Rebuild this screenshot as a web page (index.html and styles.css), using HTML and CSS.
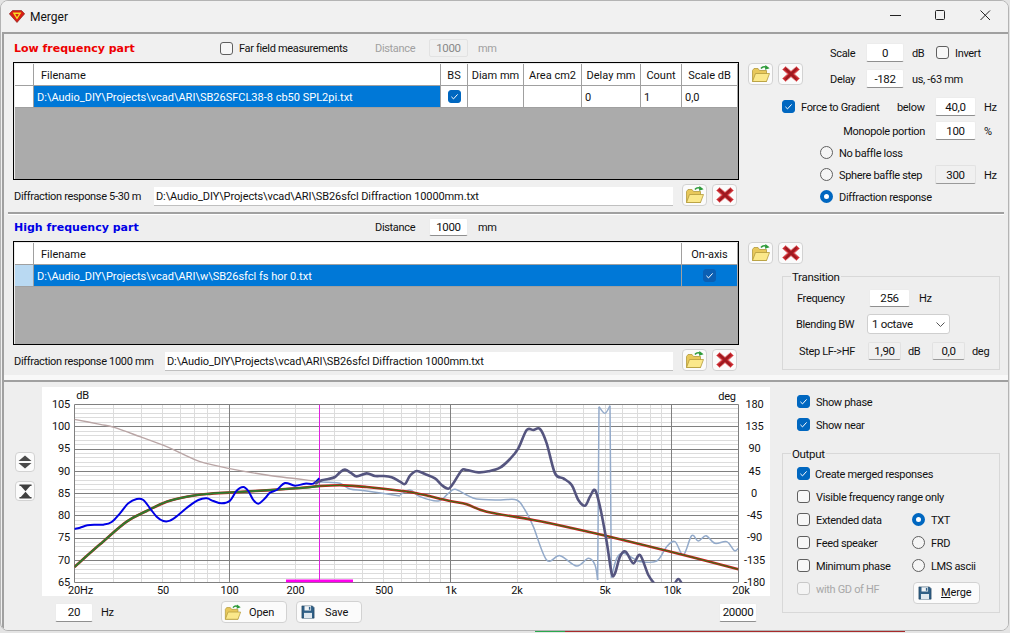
FILE: index.html
```html
<!DOCTYPE html>
<html lang="en">
<head>
<meta charset="utf-8">
<title>Merger</title>
<link rel="stylesheet" href="styles.css">
</head>
<body>
<svg class="defs" width="0" height="0" aria-hidden="true">
  <symbol id="i-folder" viewBox="0 0 20 18">
    <path d="M1.5 5.5V16.5H15.5L15.5 5.5H8.5L7 3.5H3Z" fill="#e8c85a" stroke="#b39a3c" stroke-width=".8"/>
    <path d="M1.5 16.5L4.5 8.5H18.5L15.5 16.5Z" fill="#fbe88a" stroke="#b39a3c" stroke-width=".8"/>
    <path d="M10 3.6C11.5 1.6 13.6 1.4 15.6 2.4" fill="none" stroke="#2d9a3a" stroke-width="1.6"/>
    <path d="M14.4 0L18.6 3.2L14 4.8Z" fill="#2d9a3a"/>
  </symbol>
  <symbol id="i-x" viewBox="0 0 20 18">
    <path d="M4.5 1.5L10 6.2L15.5 1.5L18.5 4.5L13.4 9L18.5 13.5L15.5 16.5L10 11.8L4.5 16.5L1.5 13.5L6.6 9L1.5 4.5Z" fill="#c8242c" stroke="#e58a8a" stroke-width=".8" stroke-linejoin="round"/>
    <path d="M4.6 3.6L15.4 14.6M15.4 3.6L4.6 14.6" stroke="#9c1a20" stroke-width="2.2"/>
  </symbol>
  <symbol id="i-save" viewBox="0 0 16 16">
    <path d="M1 1H13L15 3V15H1Z" fill="#2f5f86" stroke="#1c3b55" stroke-width=".6"/>
    <path d="M4 1.3H11.5V6.3H4Z" fill="#f1f4f6"/>
    <path d="M9 2.2H10.7V5.4H9Z" fill="#2f5f86"/>
    <path d="M3.4 9H12.6V15H3.4Z" fill="#dfe8ef"/>
  </symbol>
  <symbol id="i-updown" viewBox="0 0 14 14">
    <path d="M7 0.5L13.5 6H0.5Z M0.5 8H13.5L7 13.5Z" fill="#4a4a4a"/>
  </symbol>
  <symbol id="i-hourglass" viewBox="0 0 14 16">
    <path d="M0.5 0.5H13.5V2H12L7 7.6L2 2H0.5Z M0.5 15.5H13.5V14H12L7 8.4L2 14H0.5Z" fill="#3f3f3f"/>
  </symbol>
  <symbol id="i-tick" viewBox="0 0 13 13">
    <path d="M3.4 6.8L5.5 8.9L9.6 4.4" fill="none" stroke="#fff" stroke-width="1"/>
  </symbol>
</svg>

<div class="window">
  <header class="titlebar">
    <svg class="app-icon" viewBox="0 0 16 13" aria-hidden="true">
      <path d="M3.5 .5H12.5L15.7 3.8L8 12.5L.3 3.8Z" fill="#d81e16" stroke="#7a1a10" stroke-width=".6"/>
      <path d="M3.6 2.6H12.4L8 9.4Z" fill="#f7dc24"/>
      <path d="M6.2 4H9.8L8 7.2Z" fill="#d81e16"/>
    </svg>
    <span class="app-title">Merger</span>
    <div class="win-controls">
      <svg class="win-btn" viewBox="0 0 45 20" aria-hidden="true"><path d="M0 10.5H11" stroke="#222" stroke-width="1"/></svg>
      <svg class="win-btn" viewBox="0 0 45 20" aria-hidden="true"><rect x=".5" y="5.5" width="9" height="9" rx="1" fill="none" stroke="#222"/></svg>
      <svg class="win-btn" viewBox="0 0 28 20" aria-hidden="true"><path d="M.5 5.5L10 15M10 5.5L.5 15" stroke="#222" stroke-width="1"/></svg>
    </div>
  </header>

  <main class="client">
    <section class="part part-lf">
      <div class="left-col">
        <div class="part-head">
          <h2 class="part-title red">Low frequency part</h2>
          <span class="check far-check"></span>
          <span class="far-label">Far field measurements</span>
          <span class="dist-label dim">Distance</span>
          <span class="field w39 off dim">1000</span>
          <span class="dist-unit dim">mm</span>
        </div>
        <div class="table-wrap lf-table">
          <table class="grid">
            <colgroup><col class="c-sel"><col class="c-file"><col class="c-bs"><col class="c-diam"><col class="c-area"><col class="c-delay"><col class="c-count"><col class="c-scale"></colgroup>
            <tr class="hdr"><th></th><th class="th-file">Filename</th><th>BS</th><th>Diam mm</th><th>Area cm2</th><th>Delay mm</th><th>Count</th><th>Scale dB</th></tr>
            <tr><td></td><td class="sel">D:\Audio_DIY\Projects\vcad\ARI\SB26SFCL38-8 cb50 SPL2pi.txt</td><td class="ctr"><span class="check on inline"><svg><use href="#i-tick"/></svg></span></td><td></td><td></td><td>0</td><td>1</td><td>0,0</td></tr>
          </table>
        </div>
        <div class="diff-row">
          <span class="diff-label lf-label">Diffraction response 5-30 m</span>
          <span class="path-field lf-path">D:\Audio_DIY\Projects\vcad\ARI\SB26sfcl Diffraction 10000mm.txt</span>
          <button class="icon-btn diff-first"><svg><use href="#i-folder"/></svg></button>
          <button class="icon-btn"><svg><use href="#i-x"/></svg></button>
        </div>
      </div>
      <div class="side-col">
        <div class="side-top">
          <div class="btn-pair">
            <button class="icon-btn"><svg><use href="#i-folder"/></svg></button>
            <button class="icon-btn"><svg><use href="#i-x"/></svg></button>
          </div>
          <div class="scale-block">
            <div class="row r19"><span class="lbl w36">Scale</span><span class="field w38">0</span><span class="lbl unit w24">dB</span><span class="check"></span><span class="lbl opt">Invert</span></div>
            <div class="row r19"><span class="lbl w36">Delay</span><span class="field w38">-182</span><span class="lbl unit">us, -63 mm</span></div>
          </div>
        </div>
        <div class="row r19 force-row"><span class="check on"><svg><use href="#i-tick"/></svg></span><span class="lbl opt w96">Force to Gradient</span><span class="lbl w38">below</span><span class="field w41">40,0</span><span class="lbl unit">Hz</span></div>
        <div class="row r19 mono-row"><span class="lbl mono-label">Monopole portion</span><span class="field w41">100</span><span class="lbl unit">%</span></div>
        <div class="row r19 radio-row"><span class="radio"></span><span class="lbl opt">No baffle loss</span></div>
        <div class="row r19 radio-row"><span class="radio"></span><span class="lbl opt w96">Sphere baffle step</span><span class="field w41 off">300</span><span class="lbl unit">Hz</span></div>
        <div class="row r19 radio-row"><span class="radio on"></span><span class="lbl opt">Diffraction response</span></div>
      </div>
    </section>
    <div class="sep-short"></div>

    <section class="part part-hf">
      <div class="left-col">
        <div class="part-head hf-head">
          <h2 class="part-title blue">High frequency part</h2>
          <span class="dist-label hf-dist">Distance</span>
          <span class="field w39">1000</span>
          <span class="dist-unit">mm</span>
        </div>
        <div class="table-wrap hf-table">
          <table class="grid">
            <colgroup><col class="c-sel"><col class="c-file2"><col class="c-scale"></colgroup>
            <tr class="hdr"><th></th><th class="th-file">Filename</th><th>On-axis</th></tr>
            <tr><td class="sel-head"></td><td class="sel">D:\Audio_DIY\Projects\vcad\ARI\w\SB26sfcl fs hor 0.txt</td><td class="sel ctr"><span class="check on inline dark"><svg><use href="#i-tick"/></svg></span></td></tr>
          </table>
        </div>
        <div class="diff-row">
          <span class="diff-label hf-label">Diffraction response 1000 mm</span>
          <span class="path-field hf-path">D:\Audio_DIY\Projects\vcad\ARI\SB26sfcl Diffraction 1000mm.txt</span>
          <button class="icon-btn diff-first"><svg><use href="#i-folder"/></svg></button>
          <button class="icon-btn"><svg><use href="#i-x"/></svg></button>
        </div>
      </div>
      <div class="side-col">
        <div class="btn-pair hf-pair">
          <button class="icon-btn"><svg><use href="#i-folder"/></svg></button>
          <button class="icon-btn"><svg><use href="#i-x"/></svg></button>
        </div>
        <div class="group transition">
          <span class="legend">Transition</span>
          <div class="row t-row1"><span class="lbl t-freq">Frequency</span><span class="field w41">256</span><span class="lbl unit">Hz</span></div>
          <div class="row t-row2"><span class="lbl t-blend">Blending BW</span>
            <span class="select">1 octave<svg class="chev" viewBox="0 0 9 5" aria-hidden="true"><path d="M.5 .5L4.5 4.5L8.5 .5" fill="none" stroke="#555"/></svg></span></div>
          <div class="row t-row3"><span class="lbl t-step">Step LF-&gt;HF</span><span class="field w33 off">1,90</span><span class="lbl t-db">dB</span><span class="field w33 off">0,0</span><span class="lbl unit t-deg">deg</span></div>
        </div>
      </div>
    </section>
    <div class="sep-long"></div>

    <section class="part part-plot">
      <div class="plot-col">
        <div class="plot-row">
          <div class="zoom-btns">
            <button class="zoom-btn"><svg class="z-up"><use href="#i-updown"/></svg></button>
            <button class="zoom-btn"><svg class="z-hg"><use href="#i-hourglass"/></svg></button>
          </div>
          <svg class="chart" id="chart" viewBox="42 387 728 209" role="img" aria-label="Frequency response chart">
            <g id="grid"></g>
            <g id="curves"></g>
            <g class="axis" text-anchor="end">
              <text x="70" y="408">105</text><text x="70" y="430">100</text><text x="70" y="452">95</text><text x="70" y="474.5">90</text>
              <text x="70" y="497">85</text><text x="70" y="519">80</text><text x="70" y="541">75</text><text x="70" y="563.5">70</text><text x="70" y="586">65</text>
            </g>
            <g class="axis" text-anchor="middle">
              <text x="754.5" y="408">180</text><text x="754.5" y="430">135</text><text x="754.5" y="452">90</text><text x="754.5" y="474.5">45</text>
              <text x="754" y="497">0</text><text x="754.5" y="519">-45</text><text x="754.5" y="541">-90</text><text x="754.5" y="563.5">-135</text><text x="754.5" y="585.5">-180</text>
              <text x="80.5" y="594">20Hz</text><text x="163" y="594">50</text><text x="229.5" y="594">100</text><text x="295.5" y="594">200</text><text x="384" y="594">500</text>
              <text x="451" y="594">1k</text><text x="517" y="594">2k</text><text x="605" y="594">5k</text><text x="672.5" y="594">10k</text><text x="741" y="594">20k</text>
              <text x="82.5" y="399">dB</text><text x="727" y="400">deg</text>
            </g>
          </svg>
        </div>
        <div class="plot-bottom">
          <span class="field w38 min-f">20</span><span class="lbl unit hz-fixed">Hz</span>
          <button class="text-btn open-btn"><svg class="btn-ic"><use href="#i-folder"/></svg><span>Open</span></button>
          <button class="text-btn save-btn"><svg class="btn-ic ic-s"><use href="#i-save"/></svg><span>Save</span></button>
          <span class="field w38 max-f">20000</span>
        </div>
      </div>
      <div class="plot-side">
        <div class="row r23 show-row"><span class="check on"><svg><use href="#i-tick"/></svg></span><span class="lbl opt">Show phase</span></div>
        <div class="row r23 show-row"><span class="check on"><svg><use href="#i-tick"/></svg></span><span class="lbl opt">Show near</span></div>
        <div class="group output">
          <span class="legend">Output</span>
          <div class="row r23"><span class="check on"><svg><use href="#i-tick"/></svg></span><span class="lbl opt o-tight">Create merged responses</span></div>
          <div class="row r23"><span class="check"></span><span class="lbl opt">Visible frequency range only</span></div>
          <div class="row r23"><span class="check"></span><span class="lbl opt o-w">Extended data</span><span class="radio on"></span><span class="lbl opt">TXT</span></div>
          <div class="row r23"><span class="check"></span><span class="lbl opt o-w">Feed speaker</span><span class="radio"></span><span class="lbl opt">FRD</span></div>
          <div class="row r23"><span class="check"></span><span class="lbl opt o-w">Minimum phase</span><span class="radio"></span><span class="lbl opt">LMS ascii</span></div>
          <div class="row r23"><span class="check dis"></span><span class="lbl opt o-w dis-text">with GD of HF</span>
            <button class="text-btn merge-btn"><svg class="btn-ic ic-s"><use href="#i-save"/></svg><span><u>M</u>erge</span></button></div>
        </div>
      </div>
    </section>
  </main>
</div>
<div class="desktop-strip"><span class="seg-a"></span><span class="seg-b"></span><span class="seg-c"></span></div>
<script src="chart.js"></script>
</body>
</html>
```
FILE: styles.css
```css
* { box-sizing: border-box; }
html, body { margin: 0; padding: 0; }
body {
  width: 1010px; height: 633px; overflow: hidden; background: #e4e4e4;
  font-family: Roboto, "Liberation Sans", sans-serif; font-size: 11px; color: #111; letter-spacing: -0.33px;
}
.defs { position: absolute; }
.window {
  width: 1009px; height: 631px; background: #f0f0f0;
  border: 1px solid #b4b4b4; border-radius: 8px; overflow: hidden;
}
.titlebar { height: 31px; display: flex; align-items: center; padding-left: 8px; background: #f1f1f1; }
.app-icon { width: 16px; height: 13px; margin-top: -1px; }
.app-title { margin-left: 5px; font-size: 12px; letter-spacing: 0; }
.win-controls { margin-left: auto; display: flex; height: 20px; margin-top: -3px; }
.win-btn { width: 45px; height: 20px; display: block; overflow: visible; }
.win-btn:nth-child(3) { width: 28px; }
.client { margin-left: 1px; height: 598px; border-left: 2px solid #a0a0a0; border-top: 2px solid #a0a0a0; background: #eeeeee; }
.part { display: flex; }
.part-lf { height: 178px; background: #f0f0f0; }
.part-hf { height: 160px; padding-top: 3px; background: #eeeeee; }
.part-plot { padding-top: 5px; }
.left-col { width: 726px; margin-left: 9px; flex: none; }
.side-col { width: 252px; margin-left: 9px; flex: none; }
.sep-short { height: 3px; margin: 0 4px 0 4px; border-top: 2px solid #a0a0a0; border-bottom: 1px solid #fff; background: #a0a0a0; }
.sep-long { height: 7px; border-bottom: 2px solid #a0a0a0; background: #f8f8f8; }

.part-head { height: 20px; margin-top: 4px; display: flex; align-items: center; position: relative; }
.hf-head { margin-top: 0; height: 18px; }
.part-title { margin: 0; padding-left: 1px; width: 207px; font: bold 11px "DejaVu Sans", sans-serif; letter-spacing: 0; padding-top: 1px; }
.hf-head .part-title { width: 362px; }
.red { color: #ee0000; }
.blue { color: #0000e6; }
.far-label { margin-left: 6px; width: 136px; }
.dist-label { width: 54px; }
.hf-dist { width: 54px; }
.dist-unit { margin-left: 10px; }
.dim { color: #a0a0a0; }

.field {
  display: inline-flex; align-items: center; justify-content: center; height: 19px; flex: none;
  background: #fff; border: 1px solid #ececec; border-bottom: 1px solid #8f8f8f; border-radius: 2px;
  font-size: 11.5px;
}
.field.off { background: #f0f0f0; border-color: #e2e2e2; border-bottom-color: #9a9a9a; }
.part-head .field.off { border-bottom-color: #e2e2e2; color: #888; }
.w33 { width: 33px; height: 18px; }
.w38 { width: 38px; }
.w39 { width: 39px; height: 18px; }
.w41 { width: 41px; }

.table-wrap { border: 1px solid #000; padding: 1px 1px 0 1px; background: #ababab; box-shadow: inset 1px 1px 0 #ececec; overflow: hidden; }
.lf-table { margin-top: 4px; height: 118px; }
.hf-table { margin-top: 5px; height: 104px; }
.grid { border-collapse: separate; border-spacing: 0; table-layout: fixed; width: 722px; letter-spacing: 0; }
.grid th, .grid td {
  height: 22px; padding: 1px 0 0 1px; font-weight: normal; background: #fff; white-space: nowrap; overflow: hidden;
  border-right: 1px solid #a0a0a0; border-bottom: 1px solid #a0a0a0; text-align: left; font-size: 11px; box-sizing: border-box;
}
.grid th { text-align: center; padding: 2px 0 0 0; }
.grid th.th-file { text-align: left; padding-left: 7px; }
.grid th:last-child, .grid td:last-child { border-right: 0; }
.c-sel { width: 19px; } .c-file { width: 407px; } .c-bs { width: 27px; } .c-diam { width: 56px; }
.c-area { width: 58px; } .c-delay { width: 59px; } .c-count { width: 41px; } .c-scale { width: 55px; }
.c-file2 { width: 648px; }
.grid td.sel { background: #0078d7; color: #fff; padding-left: 3px; }
.grid td.sel-head { background: #b9d9f2; }
.grid td.ctr { text-align: center; padding: 0; }
.grid tr:nth-child(2) td { padding-left: 3px; }
.grid tr:nth-child(2) td.ctr { padding-left: 0; }

.diff-row { display: flex; align-items: flex-end; margin-top: 4px; height: 22px; }
.diff-label { padding-left: 1px; flex: none; align-self: center; padding-top: 2px; }
.lf-label { width: 141px; }
.hf-label { width: 152px; }
.path-field {
  height: 19px; display: flex; align-items: center; padding-left: 2px; background: #fff; flex: none;
  border-bottom: 1px solid #c0c0c0; font-size: 11px; letter-spacing: -0.1px;
}
.lf-path { width: 519px; }
.hf-path { width: 508px; }
.diff-first { margin-left: 9px; }

.icon-btn {
  width: 25px; height: 22px; padding: 0; display: flex; align-items: center; justify-content: center; flex: none;
  background: #fbfbfb; border: 1px solid #d2d2d2; border-radius: 4px;
}
.icon-btn + .icon-btn { margin-left: 5px; }
.icon-btn svg { width: 20px; height: 18px; display: block; }

.side-top { display: flex; height: 63px; }
.btn-pair { display: flex; margin-top: 29px; height: 22px; }
.hf-pair { margin-top: 24px; }
.scale-block { margin-left: 27px; padding-top: 9px; display: flex; flex-direction: column; gap: 7px; }
.row { display: flex; align-items: center; flex: none; }
.r19 { height: 19px; }
.r23 { height: 23px; }
.lbl { flex: none; white-space: nowrap; padding-top: 1px; }
.w36 { width: 36px; } .w24 { width: 24px; } .w96 { width: 96px; }
.lbl.w38 { width: 38px; }
.unit { margin-left: 8px; }
.opt { margin-left: 6px; }
.force-row { margin-left: 34px; }
.mono-row { margin-left: 34px; margin-top: 5px; }
.mono-label { width: 143px; text-align: right; margin-right: 10px; }
.radio-row { margin-left: 72px; margin-top: 3px; }

.check {
  width: 13px; height: 13px; flex: none; display: inline-block; background: #f7f7f7;
  border: 1px solid #5f5f5f; border-radius: 3px;
}
.check svg { width: 13px; height: 13px; display: block; margin: -1px; }
.check.on { background: #0067c0; border-color: #0067c0; }
.check.dark { background: #0b5fb3; border-color: #0b5fb3; }
.check.inline { vertical-align: middle; }
.check.dis { border-color: #c8c8c8; background: #f4f4f4; }
.radio {
  width: 13px; height: 13px; flex: none; border-radius: 50%; background: #f5f5f5; border: 1px solid #5f5f5f;
}
.radio.on { background: #fff; border: 4px solid #0067c0; }

.group { position: relative; border: 1px solid #d8d8d8; margin-left: 34px; width: 218px; }
.legend { position: absolute; left: 8px; top: -7px; padding: 0 1px; background-color: #eeeeee; font-size: 11.5px; }
.transition { margin-top: 12px; height: 94px; padding-top: 12px; }
.t-row1 { height: 18px; margin-left: 14px; }
.t-row1 .field { height: 18px; }
.t-freq { width: 72px; }
.t-row1 .unit { margin-left: 9px; }
.t-row2 { height: 20px; margin-top: 7px; margin-left: 13px; }
.t-blend { width: 71px; }
.select {
  width: 83px; height: 20px; display: flex; align-items: center; padding-left: 4px; background: #fff; position: relative;
  border: 1px solid #cfcfcf; border-radius: 3px; font-size: 11.5px;
}
.chev { position: absolute; right: 4px; top: 7px; width: 9px; height: 5px; }
.t-row3 { height: 18px; margin-top: 8px; margin-left: 16px; }
.t-step { width: 69px; }
.t-db { margin-left: 7px; width: 24px; }
.t-deg { margin-left: 7px; }

.plot-col { width: 766px; flex: none; }
.plot-row { display: flex; height: 209px; }
.zoom-btns { margin-left: 11px; width: 19px; margin-top: 65px; display: flex; flex-direction: column; gap: 9px; flex: none; }
.zoom-btn { width: 20px; height: 20px; padding: 0; display: flex; align-items: center; justify-content: center; background: #fbfbfb; border: 1px solid #d2d2d2; border-radius: 4px; }
.z-up { width: 14px; height: 14px; }
.z-hg { width: 13px; height: 15px; }
.chart { width: 728px; height: 209px; margin-left: 8px; display: block; background: #fff; flex: none; }
.axis text { font-family: Roboto, "Liberation Sans", sans-serif; font-size: 11px; fill: #111; letter-spacing: -0.2px; }

.plot-bottom { display: flex; align-items: center; height: 22px; margin-top: 5px; }
.min-f { margin-left: 51px; }
.hz-fixed { width: 15px; }
.text-btn {
  height: 22px; width: 66px; padding: 0; display: flex; align-items: center; flex: none; position: relative;
  background: #fbfbfb; border: 1px solid #d2d2d2; border-radius: 4px; font: inherit; font-size: 11px; color: #111; letter-spacing: -0.1px;
}
.btn-ic { width: 18px; height: 17px; margin-left: 2px; flex: none; }
.ic-s { width: 14px; height: 14px; margin-left: 4px; }
.open-btn { margin-left: 105px; }
.open-btn span { margin-left: 7px; }
.save-btn { margin-left: 9px; }
.save-btn span { margin-left: 10px; }
.max-f { margin-left: 357px; }
.merge-btn { width: 67px; margin-top: 8px; margin-left: 1px; }
.merge-btn span { margin-left: 9px; }

.plot-side { margin-left: 12px; width: 218px; padding-top: 3px; flex: none; }
.show-row { margin-left: 15px; }
.output { margin-left: 0; margin-top: 17px; height: 160px; padding: 8px 0 0 14px; }
.o-tight { margin-left: 5px; }
.o-w { width: 96px; }
.dis-text { color: #a8a8a8; }
.desktop-strip { display: flex; height: 1px; margin-left: 535px; }
.seg-a { width: 30px; background: #2aa84f; }
.seg-b { width: 340px; background: #a82a2a; }
.seg-c { width: 100px; background: #e4e4e4; }
```
FILE: chart.js
```js
(function () {
  var NS = 'http://www.w3.org/2000/svg';
  var L = 74.5, R = 738.5, T = 404.5, B = 582.5;
  var grid = document.getElementById('grid');
  var curves = document.getElementById('curves');

  function el(parent, name, attrs) {
    var n = document.createElementNS(NS, name);
    for (var k in attrs) n.setAttribute(k, attrs[k]);
    parent.appendChild(n);
    return n;
  }
  function hline(y, c) { el(grid, 'line', { x1: L, x2: R, y1: y, y2: y, stroke: c, 'stroke-width': 1 }); }
  function vline(x, c) { el(grid, 'line', { x1: x, x2: x, y1: T, y2: B, stroke: c, 'stroke-width': 1 }); }
  function fx(f) { return Math.round(L + (Math.log(f / 20) / Math.LN10) * (R - L) / 3 - 0.5) + 0.5; }

  for (var d = 0; d <= 40; d++) {
    if (d % 5) hline(Math.round(T + d * (B - T) / 40 - 0.5) + 0.5, '#dcdcdc');
  }
  [30, 40, 50, 60, 70, 80, 90, 200, 300, 400, 500, 600, 700, 800, 900,
   2000, 3000, 4000, 5000, 6000, 7000, 8000, 9000].forEach(function (f) { vline(fx(f), '#dcdcdc'); });
  for (var m = 0; m <= 8; m++) hline(Math.round(T + m * (B - T) / 8 - 0.5) + 0.5, '#808080');
  [20, 100, 1000, 10000, 20000].forEach(function (f) { vline(fx(f), '#808080'); });

  var defs = el(curves, 'defs', {});
  var clip = el(defs, 'clipPath', { id: 'plot-clip' });
  el(clip, 'rect', { x: L, y: T, width: R - L, height: B - T });
  var g = el(curves, 'g', { 'clip-path': 'url(#plot-clip)' });

  // Points were read off the chart at 3x; offset is the crop's left edge.
  function conv(points, ox) {
    var out = [];
    for (var i = 0; i < points.length; i += 2) out.push([ox + points[i] / 3, 385 + points[i + 1] / 3]);
    return out;
  }
  function smooth(p) {
    var s = 'M' + p[0][0].toFixed(2) + ' ' + p[0][1].toFixed(2);
    for (var i = 0; i < p.length - 1; i++) {
      var a = p[Math.max(i - 1, 0)], b = p[i], c = p[i + 1], e = p[Math.min(i + 2, p.length - 1)];
      var k = 1 / 6;
      s += 'C' + (b[0] + (c[0] - a[0]) * k).toFixed(2) + ' ' + (b[1] + (c[1] - a[1]) * k).toFixed(2) + ' ' +
        (c[0] - (e[0] - b[0]) * k).toFixed(2) + ' ' + (c[1] - (e[1] - b[1]) * k).toFixed(2) + ' ' +
        c[0].toFixed(2) + ' ' + c[1].toFixed(2);
    }
    return s;
  }
  function curve(pts, color, width) {
    el(g, 'path', { d: smooth(pts), fill: 'none', stroke: color, 'stroke-width': width, 'stroke-linejoin': 'round' });
  }

  var rose = conv([223,103,300,118,345,128,420,155,500,185,550,208,600,230,685,250,800,270,945,288], 0);

  var near1 = conv([950,290,985,292,1020,295,1050,312,1100,318,1200,333], 0);
  var near2 = conv([0,330,30,315,60,335,115,348,145,325,165,313,200,330,230,342,300,345,350,345,375,375,400,425,440,525,480,512,530,543,565,520,585,540,593,585], 400);
  var spike = conv([593,585,597,65], 400);
  var top = conv([597,65,615,85,630,62], 400);
  var spike2 = conv([630,62,634,578], 400);
  var near3 = conv([634,578,650,520,670,505,700,520,720,530,770,528,800,485,825,470,850,510,875,452,895,468,918,452,945,475,980,470,1003,497,1015,490], 400);

  var merged = conv([223,546,300,478,380,410,440,378,500,350,560,335,620,327,700,322,800,316,900,309,960,303,1030,301,1100,306,1200,317], 0)
    .concat(conv([50,325,150,348,200,358,260,380,400,405,460,417,620,453,800,497,1015,553], 400));

  var blue = conv([223,432,240,428,262,421,285,419,310,419,335,411,360,385,385,355,410,342,430,345,450,370,470,395,490,408,510,407,535,390,565,365,595,345,620,340,640,348,665,355,690,347,710,317,730,306,745,318,760,345,775,356,795,340,810,323,830,315,855,294,885,302,915,296,940,296,958,280], 0);

  var dark = conv([945,296,965,286,985,282,1005,276,1020,262,1035,254,1055,265,1070,274,1100,265,1125,273,1150,273,1175,277,1200,290], 0)
    .concat(conv([15,297,30,272,50,258,75,267,105,280,125,300,145,311,160,295,185,256,200,255,235,262,265,259,300,248,330,222,355,190,380,135,400,135,420,132,440,175,465,265,490,280,515,300,535,345,555,362,570,335,585,315,600,365,620,470,635,565,645,565,660,515,677,500,700,535,720,510,745,570,765,598], 400));
  var dark2 = conv([822,600,835,582,848,600], 400);

  el(g, 'line', { x1: 319.5, x2: 319.5, y1: T, y2: B, stroke: '#e020e0', 'stroke-width': 1 });
  curve(rose, '#b9a5a5', 1.4);
  [near1, near2, spike, top, spike2, near3].forEach(function (p) { curve(p, '#93aaca', 1.5); });
  curve(merged, '#c81e1e', 2.6);
  curve(merged.slice(0, 11), '#2f7a2f', 2);
  curve(merged.slice(10), '#2a7a14', 1);
  curve(blue, '#0000e6', 2);
  curve(dark, '#55557f', 2.6);
  curve(dark2, '#55557f', 2.6);
  el(g, 'rect', { x: 286, y: 579.5, width: 67, height: 3, fill: '#ff00ee' });
})();
```
